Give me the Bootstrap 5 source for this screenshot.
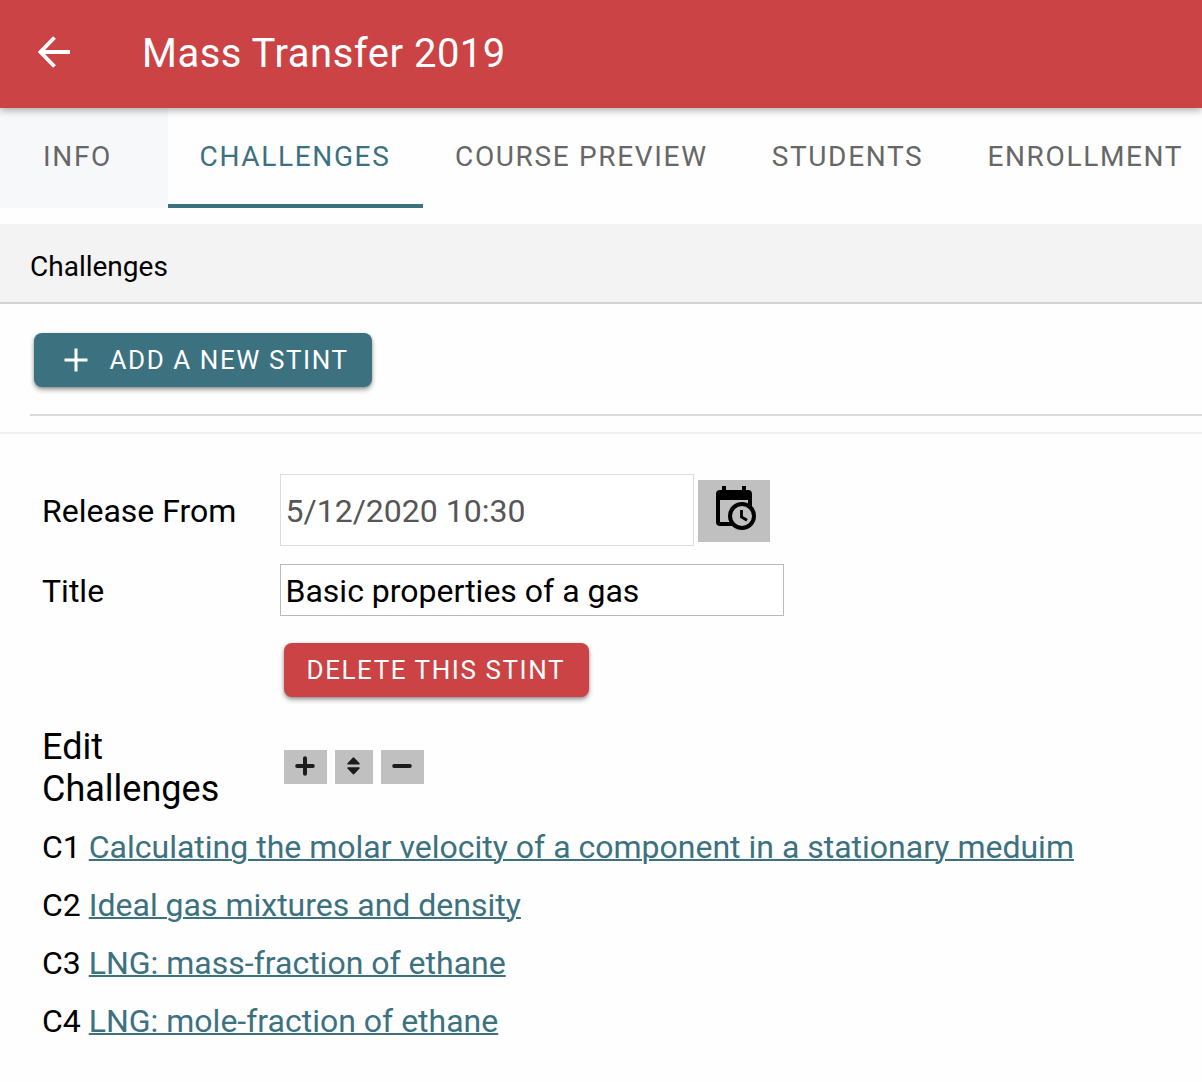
<!DOCTYPE html>
<html lang="en">
<head>
<meta charset="utf-8">
<meta name="viewport" content="width=device-width, initial-scale=1">
<title>Mass Transfer 2019</title>
<link href="https://cdn.jsdelivr.net/npm/bootstrap@5.3.0/dist/css/bootstrap.min.css" rel="stylesheet">
<style>
  body { font-family: Roboto, "Liberation Sans", sans-serif; font-size: 32px; color: #000; overflow: hidden; background: #fefefe; min-height: 1082px; }
  .topbar { height: 108px; background: #cb4344; padding: 0 37px; box-shadow: 0 2px 8px rgba(0,0,0,.35); z-index: 2; }
  .topbar h1 { font-size: 40px; letter-spacing: .5px; line-height: 48px; margin: 0 0 0 71px; font-weight: 400; padding-bottom: 1px; }
  .topbar svg { margin-bottom: 4px; }
  .tabstrip { height: 116px; }
  .tabstrip .nav-link { flex: none; height: 100px; padding: 0 32px; line-height: 97px; font-size: 28px; letter-spacing: 1.66px; color: #676767; border-radius: 0; white-space: nowrap; }
  .tabstrip .nav-link.tab-first { width: 168px; padding: 0 0 0 43px; background: #f7f8fa; }
  .tabstrip .nav-link.active { color: #3c7180; border-bottom: 4px solid #3c7180; width: 255px; padding-left: 31.500px; }
  .section-head { height: 80px; background: #f3f3f3; border-bottom: 2px solid #d3d3d3; padding-left: 30px; font-size: 28px; line-height: 86px; }
  .toolbar-zone { height: 130px; padding: 29px 0 0 30px; border-bottom: 2px solid #f1f1f1; }
  .toolbar-inner { height: 83px; border-bottom: 2px solid #dadada; padding-left: 4px; }
  .btn-raised { height: 54px; border: 0; border-radius: 8px; padding: 0; font-size: 26px; line-height: 55px; letter-spacing: 1.57px; color: #fff; box-shadow: 0 3px 5px rgba(0,0,0,.32), 0 1px 3px rgba(0,0,0,.2); }
  .btn-teal, .btn-teal:hover { background: #3c7180; width: 338px; color: #fff; }
  .btn-teal svg { margin: 0 21.500px 0 30px; }
  .btn-red, .btn-red:hover { background: #cb4344; width: 305px; color: #fff; margin-left: 4px; padding-left: 22.500px; text-align: left; }
  .stint { padding: 40px 0 0 42px; }
  .field-label { width: 238px; flex: none; }
  label.field-label { padding-top: 2px; }
  .field-row { line-height: 40px; }
  .stint .form-control { border-radius: 0; font-size: 32px; padding: 2px 4.500px 0; color: #000; line-height: 40px; }
  .stint .date-input { width: 414px; height: 72px; border-color: #dcdcdc; color: #565656; background: #fff; }
  .stint .title-input { width: 504px; height: 52px; border-color: #bababa; }
  .btn-gray { background: #c0c0c0; border: 0; border-radius: 0; padding: 0; display: flex; justify-content: center; }
  .btn-cal { width: 72px; height: 62px; margin: 2px 0 0 4px; }
  .btn-cal svg { margin: 5px 0 0 4px; }
  .btn-tool { height: 34px; }
  .btn-tool svg { margin: 6px 1px 0 0; }
  .edit-title { font-size: 36px; line-height: 42px; padding-top: 1px; margin-bottom: -1px; }
  .challenge-list li { height: 58px; line-height: 58px; }
  .challenge-list a { color: #3c7180; text-decoration-thickness: 2px; }
</style>
</head>
<body>
<header class="topbar d-flex align-items-center text-white position-relative">
  <svg width="34" height="34" viewBox="0 0 34 34" fill="none" stroke="#fff" stroke-width="3.900"><path d="M33 17H4M17.500 2.500 3.500 17l14 14.500"/></svg>
  <h1>Mass Transfer 2019</h1>
</header>
<nav class="tabstrip nav flex-nowrap">
  <a class="nav-link tab-first" href="#">INFO</a>
  <a class="nav-link active" href="#">CHALLENGES</a>
  <a class="nav-link" href="#">COURSE PREVIEW</a>
  <a class="nav-link" href="#">STUDENTS</a>
  <a class="nav-link" href="#">ENROLLMENT</a>
</nav>
<main>
  <div class="section-head">Challenges</div>
  <div class="toolbar-zone">
    <div class="toolbar-inner">
      <button class="btn btn-raised btn-teal d-flex align-items-center" type="button">
        <svg width="24" height="24" viewBox="0 0 24 24" stroke="#fff" stroke-width="3"><path d="M12 .5v23M.5 12h23"/></svg>
        <span>ADD A NEW STINT</span>
      </button>
    </div>
  </div>
  <section class="stint">
    <div class="field-row d-flex align-items-center">
      <label class="field-label" for="rel">Release From</label>
      <input id="rel" class="form-control date-input" value="5/12/2020 10:30">
      <button class="btn btn-gray btn-cal" type="button" aria-label="Pick date">
        <svg width="42" height="46" viewBox="0 0 42 46">
          <path fill-rule="evenodd" d="M7 1h4v4h16V1h4v4h2a4 4 0 0 1 4 4v14h-4v-8H5v22h12v4H5a4 4 0 0 1-4-4V9a4 4 0 0 1 4-4h2z"/>
          <circle cx="27" cy="31" r="12" fill="#c0c0c0" stroke="#000" stroke-width="4"/>
          <path d="M26.500 25v7l5.500 3.300" fill="none" stroke="#000" stroke-width="2.800"/>
        </svg>
      </button>
    </div>
    <div class="field-row d-flex align-items-center" style="margin-top:18px">
      <label class="field-label" for="ttl">Title</label>
      <input id="ttl" class="form-control title-input" value="Basic properties of a gas">
    </div>
    <div class="d-flex" style="margin-top:27px">
      <div class="field-label"></div>
      <button class="btn btn-raised btn-red" type="button">DELETE THIS STINT</button>
    </div>
    <div class="d-flex align-items-center" style="margin-top:28px">
      <div class="field-label edit-title">Edit<br>Challenges</div>
      <div class="d-flex gap-2 ms-1">
        <button class="btn btn-gray btn-tool" style="width:43px" type="button" aria-label="Add"><svg width="20" height="20" viewBox="0 0 20 20" stroke="#1c1c1c" stroke-width="4" stroke-linecap="round"><path d="M10 2.200v15.600M2.200 10h15.600"/></svg></button>
        <button class="btn btn-gray btn-tool" style="width:38px" type="button" aria-label="Reorder"><svg width="14" height="20" viewBox="0 -1 14 20" fill="#1c1c1c" stroke="#1c1c1c" stroke-width="1.500" stroke-linejoin="round"><path d="M6.500 1 12 6.800H1zM6.500 16.800 1 11h11z"/></svg></button>
        <button class="btn btn-gray btn-tool" style="width:43px" type="button" aria-label="Remove"><svg width="20" height="20" viewBox="0 0 20 20" stroke="#1c1c1c" stroke-width="4" stroke-linecap="round"><path d="M2.200 10h15.600"/></svg></button>
      </div>
    </div>
    <ul class="challenge-list list-unstyled mb-0" style="margin-top:9px">
      <li>C1 <a href="#">Calculating the molar velocity of a component in a stationary meduim</a></li>
      <li>C2 <a href="#">Ideal gas mixtures and density</a></li>
      <li>C3 <a href="#">LNG: mass-fraction of ethane</a></li>
      <li>C4 <a href="#">LNG: mole-fraction of ethane</a></li>
    </ul>
  </section>
</main>
<script src="https://cdn.jsdelivr.net/npm/bootstrap@5.3.0/dist/js/bootstrap.bundle.min.js"></script>
</body>
</html>
